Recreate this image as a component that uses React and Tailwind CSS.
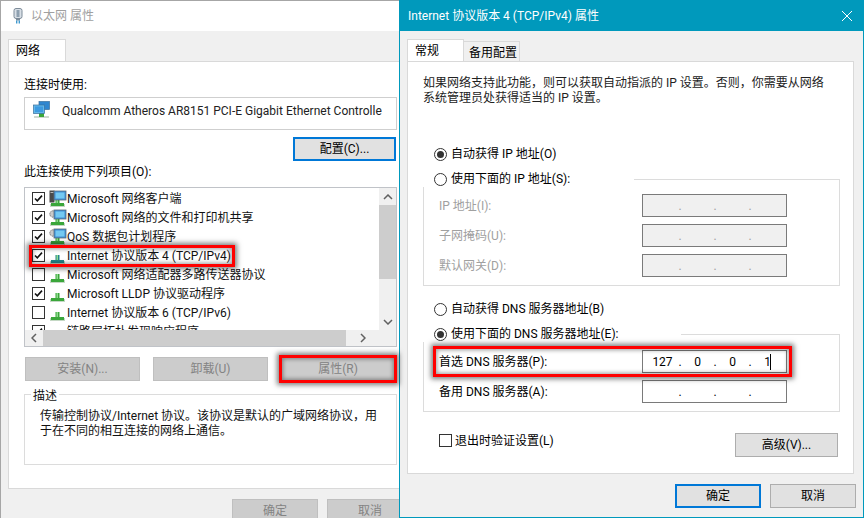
import React from 'react'

const FONT = "font-['Roboto','Noto_Sans_CJK_SC',sans-serif]"

function ProtoBase({ color = '#3aa63a' }) {
  return (
    <>
      <rect x="1" y="14" width="15" height="3" fill="#c4d8c4" />
      <rect x="2" y="13" width="13" height="3" fill={color} />
      <rect x="6.5" y="8" width="4" height="6" fill={color} />
      <rect x="7.5" y="8" width="1.5" height="5" fill="#8fdc8f" />
    </>
  )
}

function Monitor() {
  return (
    <>
      <rect x="5" y="1" width="12" height="9" fill="#3f8fd6" stroke="#5a6a78" strokeWidth="0.8" />
      <rect x="6.5" y="2.5" width="9" height="6" fill="#74c9f2" />
    </>
  )
}

function ItemIcon({ type }) {
  return (
    <svg width="18" height="18" viewBox="0 0 18 18" className="shrink-0">
      {type === 'client' && (
        <>
          <ProtoBase />
          <rect x="0.5" y="0.5" width="5" height="12" fill="#4a4a4a" />
          <rect x="1.5" y="2" width="3" height="1" fill="#b8b8b8" />
          <Monitor />
        </>
      )}
      {type === 'service' && (
        <>
          <ProtoBase />
          <circle cx="4" cy="5" r="3.2" fill="#c9c9c9" stroke="#777" strokeWidth="1" strokeDasharray="1.5 0.8" />
          <Monitor />
        </>
      )}
      {type === 'proto' && <ProtoBase />}
      {type === 'ipv4' && <ProtoBase color="#23868a" />}
    </svg>
  )
}

function AdapterIcon() {
  return (
    <svg width="17" height="18" viewBox="0 0 17 18">
      <rect x="1" y="15" width="15" height="2" fill="#cfd8cf" />
      <rect x="6" y="12" width="5" height="4" fill="#3aa63a" />
      <rect x="6" y="0.5" width="10.5" height="8" fill="#2f86cf" stroke="#3a6f9c" strokeWidth="0.7" />
      <rect x="0.5" y="4" width="11" height="8.5" fill="#62b7ea" stroke="#3a6f9c" strokeWidth="0.7" />
      <rect x="2" y="5.5" width="8" height="5.5" fill="#3d9ae0" />
    </svg>
  )
}

function PlugIcon() {
  return (
    <svg width="12" height="16" viewBox="0 0 12 16">
      <rect x="2" y="0.5" width="8" height="10" rx="2" fill="#d8dfe6" stroke="#7d8b99" />
      <rect x="4.5" y="2" width="3" height="7" fill="#8ea0b0" />
      <rect x="4" y="10.5" width="4" height="2" fill="#7d8b99" />
      <rect x="4" y="12.5" width="1.4" height="3" fill="#3f9ad0" />
      <rect x="6.6" y="12.5" width="1.4" height="3" fill="#3f9ad0" />
    </svg>
  )
}

function CheckBox({ checked }) {
  return (
    <span className="flex h-[13px] w-[13px] shrink-0 items-center justify-center border border-[#333333] bg-white">
      {checked && (
        <svg width="11" height="11" viewBox="0 0 11 11">
          <path d="M2 5.5 L4.3 7.8 L9 2.6" fill="none" stroke="#111111" strokeWidth="1.6" />
        </svg>
      )}
    </span>
  )
}

function Radio({ checked }) {
  return (
    <span className="flex h-[13px] w-[13px] shrink-0 items-center justify-center rounded-full border border-[#333333] bg-white">
      {checked && <span className="h-[7px] w-[7px] rounded-full bg-[#333333]" />}
    </span>
  )
}

function Button({ children, width, disabled, focused, className = '' }) {
  const look = disabled
    ? 'border border-[#bfbfbf] bg-[#cccccc] text-[#838383]'
    : focused
      ? 'border-2 border-[#0078d7] bg-[#e1e1e1] text-black'
      : 'border border-[#adadad] bg-[#e1e1e1] text-black'
  return (
    <div className={`flex h-[24px] shrink-0 items-center justify-center ${width} ${look} ${className}`}>
      {children}
    </div>
  )
}

function IpField({ values, disabled, cursor }) {
  const cells = values || ['', '', '', '']
  return (
    <div className={`relative flex h-[23px] w-[145px] items-center border border-[#7a7a7a] pl-[4px] ${disabled ? 'bg-[#f0f0f0]' : 'bg-white'}`}>
      {cells.map((v, i) => (
        <div key={i} className="flex w-[35px]">
          <span className="w-[31px] text-center">{v}</span>
          {i < 3 && <span className="w-[4px] text-center">.</span>}
        </div>
      ))}
      {cursor && <span className="absolute left-[127px] top-[3px] h-[16px] w-px bg-black" />}
    </div>
  )
}

function FieldRow({ label, disabled, values, cursor }) {
  return (
    <div className={`flex items-center pl-[15px] ${disabled ? 'text-[#a0a0a0]' : 'text-black'}`}>
      <div className="w-[203px]">{label}</div>
      <IpField disabled={disabled} values={values} cursor={cursor} />
    </div>
  )
}

function RadioRow({ checked, children }) {
  return (
    <div className="flex h-[16px] items-center gap-[4px] pl-[11px]">
      <Radio checked={checked} />
      <span>{children}</span>
    </div>
  )
}

const components = [
  { icon: 'client', on: true, text: 'Microsoft 网络客户端' },
  { icon: 'service', on: true, text: 'Microsoft 网络的文件和打印机共享' },
  { icon: 'service', on: true, text: 'QoS 数据包计划程序' },
  { icon: 'ipv4', on: true, text: 'Internet 协议版本 4 (TCP/IPv4)' },
  { icon: 'proto', on: false, text: 'Microsoft 网络适配器多路传送器协议' },
  { icon: 'proto', on: true, text: 'Microsoft LLDP 协议驱动程序' },
  { icon: 'proto', on: false, text: 'Internet 协议版本 6 (TCP/IPv6)' },
  { icon: 'proto', on: true, text: '链路层拓扑发现响应程序' },
]

function ComponentList() {
  return (
    <div className="ml-[15px] mt-[7px] flex h-[160px] w-[373px] flex-col border border-[#c0c3c8] bg-white">
      <div className="flex h-[142px] overflow-hidden">
        <div className="flex-1 overflow-hidden pt-px">
          {components.map((c) => (
            <div key={c.text} className="flex h-[19px] items-center pl-[7px] text-[#111111]">
              <CheckBox checked={c.on} />
              <span className="ml-[4px] w-[18px]"><ItemIcon type={c.icon} /></span>
              <span className="whitespace-nowrap">{c.text}</span>
            </div>
          ))}
        </div>
        <div className="flex w-[17px] flex-col bg-[#f0f0f0]">
          <div className="flex h-[17px] items-center justify-center">
            <svg width="10" height="6" viewBox="0 0 10 6"><path d="M1 5 L5 1 L9 5" fill="none" stroke="#606060" strokeWidth="1.5" /></svg>
          </div>
          <div className="h-[74px] bg-[#cdcdcd]" />
          <div className="mt-auto flex h-[17px] items-center justify-center">
            <svg width="10" height="6" viewBox="0 0 10 6"><path d="M1 1 L5 5 L9 1" fill="none" stroke="#606060" strokeWidth="1.5" /></svg>
          </div>
        </div>
      </div>
      <div className="flex h-[16px] bg-[#f0f0f0]">
        <div className="flex w-[18px] items-center justify-center">
          <svg width="6" height="10" viewBox="0 0 6 10"><path d="M5 1 L1 5 L5 9" fill="none" stroke="#606060" strokeWidth="1.5" /></svg>
        </div>
        <div className="w-[303px] bg-[#cdcdcd]" />
        <div className="flex w-[34px] items-center justify-center">
          <svg width="6" height="10" viewBox="0 0 6 10"><path d="M1 1 L5 5 L1 9" fill="none" stroke="#606060" strokeWidth="1.5" /></svg>
        </div>
      </div>
    </div>
  )
}

function LeftWindow() {
  return (
    <div className="absolute left-0 top-0 h-[518px] w-[400px] overflow-hidden border-l border-t border-[#a6a6a6] bg-[#f0f0f0]">
      <div className="flex h-[30px] items-center bg-white pl-[11px] text-[#a0a0a0]">
        <PlugIcon />
        <span className="ml-[7px]">以太网 属性</span>
      </div>
      <div className="ml-[7px] mt-[8px] flex h-[22px] w-[58px] items-center border border-b-0 border-[#d9d9d9] bg-white pl-[7px] text-black">
        网络
      </div>
      <div className="ml-[7px] h-[428px] w-[420px] border border-[#d9d9d9] bg-white text-black">
        <div className="ml-[15px] mt-[15px] h-[16px] leading-[16px]">连接时使用:</div>
        <div className="ml-[15px] mt-[4px] flex h-[33px] w-[373px] items-start border border-[#cfcfcf] pl-[8px] pt-[3px]">
          <AdapterIcon />
          <span className="ml-[12px] mt-[2px] whitespace-nowrap text-[#222222]">Qualcomm Atheros AR8151 PCI-E Gigabit Ethernet Controlle</span>
        </div>
        <Button width="w-[103px]" focused className="ml-[284px] mt-[7px]">配置(C)...</Button>
        <div className="ml-[15px] mt-[3px] h-[16px] leading-[16px]">此连接使用下列项目(O):</div>
        <ComponentList />
        <div className="ml-[16px] mt-[10px] flex gap-[13px]">
          <Button width="w-[115px]" disabled>安装(N)...</Button>
          <Button width="w-[115px]" disabled>卸载(U)</Button>
          <Button width="w-[114px]" disabled>属性(R)</Button>
        </div>
        <div className="relative ml-[15px] mt-[13px] h-[71px] w-[373px] border border-[#dcdcdc] pl-[15px] pt-[14px] leading-[15px] text-[#111111]">
          <span className="absolute -top-[6px] left-[6px] bg-white px-[2px]">描述</span>
          <p>传输控制协议/Internet 协议。该协议是默认的广域网络协议，用</p>
          <p>于在不同的相互连接的网络上通信。</p>
        </div>
      </div>
      <div className="ml-[231px] mt-[10px] flex gap-[9px]">
        <Button width="w-[86px]" disabled>确定</Button>
        <Button width="w-[86px]" disabled>取消</Button>
      </div>
    </div>
  )
}

function RightWindow() {
  return (
    <div className="absolute left-[399px] top-0 h-[518px] w-[465px] overflow-hidden border border-t-0 border-[#0099bc] bg-[#f0f0f0]">
      <div className="flex h-[31px] items-center justify-between bg-[#0099bc] pl-[8px] pr-[10px] text-white">
        <span>Internet 协议版本 4 (TCP/IPv4) 属性</span>
        <svg width="12" height="12" viewBox="0 0 12 12"><path d="M1 1 L11 11 M11 1 L1 11" stroke="#ffffff" strokeWidth="1" /></svg>
      </div>
      <div className="ml-[7px] mt-[8px] flex h-[22px] items-end">
        <div className="flex h-[22px] w-[57px] items-center border border-b-0 border-[#d9d9d9] bg-white pl-[7px] text-black">常规</div>
        <div className="flex h-[20px] w-[56px] items-center border border-b-0 border-l-0 border-[#d9d9d9] bg-[#f0f0f0] pl-[5px] pt-[2px] text-black">备用配置</div>
      </div>
      <div className="ml-[7px] h-[413px] w-[447px] border border-[#d9d9d9] bg-white text-black">
        <div className="ml-[15px] mt-[14px] leading-[15px] text-[#222222]">
          <p>如果网络支持此功能，则可以获取自动指派的 IP 设置。否则，你需要从网络</p>
          <p>系统管理员处获得适当的 IP 设置。</p>
        </div>
        <div className="ml-[15px] mt-[40px]">
          <RadioRow checked>自动获得 IP 地址(O)</RadioRow>
        </div>
        <div className="relative ml-[15px] mt-[17px] h-[107px] w-[417px] border border-[#dcdcdc]">
          <div className="absolute -top-[9px] left-[-1px] w-[211px] bg-white">
            <RadioRow>使用下面的 IP 地址(S):</RadioRow>
          </div>
          <div className="flex flex-col gap-[7px] pt-[14px]">
            <FieldRow label="IP 地址(I):" disabled />
            <FieldRow label="子网掩码(U):" disabled />
            <FieldRow label="默认网关(D):" disabled />
          </div>
        </div>
        <div className="ml-[15px] mt-[15px]">
          <RadioRow>自动获得 DNS 服务器地址(B)</RadioRow>
        </div>
        <div className="relative ml-[15px] mt-[17px] h-[78px] w-[417px] border border-[#dcdcdc]">
          <div className="absolute -top-[9px] left-[-1px] w-[258px] bg-white">
            <RadioRow checked>使用下面的 DNS 服务器地址(E):</RadioRow>
          </div>
          <div className="flex flex-col gap-[7px] pt-[15px]">
            <FieldRow label="首选 DNS 服务器(P):" values={['127', '0', '0', '1']} cursor />
            <FieldRow label="备用 DNS 服务器(A):" />
          </div>
        </div>
        <div className="ml-[31px] mt-[21px] flex items-start">
          <span className="mt-px"><CheckBox /></span>
          <span className="ml-[3px]">退出时验证设置(L)</span>
          <Button width="w-[103px]" className="ml-auto mr-[15px]">高级(V)...</Button>
        </div>
      </div>
      <div className="ml-[275px] mt-[10px] flex gap-[9px]">
        <Button width="w-[86px]" focused>确定</Button>
        <Button width="w-[86px]">取消</Button>
      </div>
    </div>
  )
}

function Highlight({ className }) {
  return <div className={`pointer-events-none absolute z-10 border-[3px] border-[#ff0000] shadow-[0_0_5px_2px_rgba(0,0,0,0.5),inset_0_0_4px_1px_rgba(0,0,0,0.4)] ${className}`} />
}

export default function App() {
  return (
    <div className={`relative h-[518px] w-[864px] overflow-hidden bg-[#f0f0f0] text-[12px] leading-[16px] ${FONT}`}>
      <LeftWindow />
      <RightWindow />
      <Highlight className="left-[29px] top-[245px] h-[22px] w-[206px]" />
      <Highlight className="left-[279px] top-[355px] h-[28px] w-[118px]" />
      <Highlight className="left-[433px] top-[346px] h-[31px] w-[359px]" />
    </div>
  )
}
